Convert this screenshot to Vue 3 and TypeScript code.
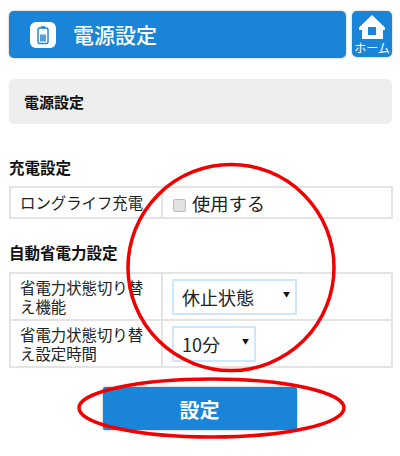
<script setup lang="ts">
import { ref } from 'vue'

const longLife = ref(false)
const powerState = ref('休止状態')
const timeout = ref('10分')
</script>

<template>
  <div class="page">
    <header class="top">
      <div class="title-bar">
        <span class="title-icon">
          <svg viewBox="0 0 26 26" width="26" height="26">
            <rect width="26" height="26" rx="6" fill="#fff" />
            <rect x="8" y="6" width="10" height="15.500" rx="1.500" fill="none" stroke="#1a85d8" stroke-width="1.400" />
            <rect x="11" y="4.200" width="4" height="2" fill="#1a85d8" />
            <rect x="10" y="12.500" width="6" height="7" fill="#4f9fdc" />
          </svg>
        </span>
        <h1>電源設定</h1>
      </div>
      <div class="home">
        <svg viewBox="0 0 28 24" width="28" height="24">
          <path fill-rule="evenodd" fill="#fff" d="M14 0 L27 12.500 L27 15 L25 15 L25 24 L4 24 L4 15 L1 15 L1 12.500 Z M10 12 L10 20 L18 20 L18 12 Z" />
        </svg>
        <span>ホーム</span>
      </div>
    </header>

    <div class="crumb">電源設定</div>

    <h2 class="first">充電設定</h2>
    <table>
      <tbody>
        <tr>
          <th class="one-line">ロングライフ充電</th>
          <td class="check-cell">
            <label class="check"><input v-model="longLife" type="checkbox" /><span>使用する</span></label>
          </td>
        </tr>
      </tbody>
    </table>

    <h2 class="second">自動省電力設定</h2>
    <table>
      <tbody>
        <tr>
          <th>省電力状態切り替え機能</th>
          <td>
            <div class="select wide">
              <span>{{ powerState }}</span><i>▼</i>
            </div>
          </td>
        </tr>
        <tr>
          <th>省電力状態切り替え設定時間</th>
          <td>
            <div class="select narrow">
              <span>{{ timeout }}</span><i>▼</i>
            </div>
          </td>
        </tr>
      </tbody>
    </table>

    <div class="actions">
      <button type="button">設定</button>
    </div>

    <!-- 赤い丸の注釈 -->
    <svg class="marks" viewBox="0 0 400 456" width="400" height="456">
      <circle cx="231" cy="267.500" r="103" fill="none" stroke="#f00000" stroke-width="3.500" />
      <ellipse cx="211.500" cy="408" rx="132.500" ry="29" fill="none" stroke="#f00000" stroke-width="3.500" />
    </svg>
  </div>
</template>

<style>
html, body { margin: 0; background: #fff; }
</style>

<style scoped>
.page {
  position: relative;
  width: 400px;
  height: 456px;
  overflow: hidden;
  box-sizing: border-box;
  padding: 11px 8px 0 9px;
  background: #fff;
  color: #222;
  font-family: "Noto Sans CJK JP", "Liberation Sans", sans-serif;
}
.top {
  display: flex;
  gap: 6px;
  align-items: flex-start;
}
.title-bar {
  flex: 1;
  height: 47px;
  display: flex;
  align-items: center;
  gap: 17px;
  padding-left: 21px;
  box-sizing: border-box;
  background: #1a85d8;
  border-radius: 5px;
  box-shadow: 0 0 2px rgba(120, 100, 80, 0.6);
}
.title-icon { display: flex; }
.title-bar h1 {
  margin: 0;
  color: #fff;
  font-size: 21px;
  font-weight: 500;
  line-height: 1;
}
.home {
  width: 40px;
  height: 46px;
  background: #1a85d8;
  border-radius: 5px;
  box-shadow: 0 0 2px rgba(120, 100, 80, 0.6);
  display: flex;
  flex-direction: column;
  align-items: center;
  padding-top: 4px;
  box-sizing: border-box;
}
.home span {
  margin-top: 2px;
  color: #fff;
  font-size: 12px;
  line-height: 14px;
  white-space: nowrap;
}
.crumb {
  margin-top: 21px;
  height: 45px;
  line-height: 46px;
  padding-left: 15px;
  background: #eee;
  border-radius: 5px;
  font-size: 15px;
  font-weight: 700;
  color: #111;
}
h2 {
  margin: 0;
  font-size: 15.500px;
  font-weight: 700;
  line-height: 20px;
  color: #111;
}
h2.first { margin-top: 33px; margin-bottom: 9px; }
h2.second { margin-top: 23px; margin-bottom: 10px; }
table {
  width: 384px;
  table-layout: fixed;
  border-collapse: collapse;
}
th, td {
  border: 2px solid #e4e4e4;
  padding: 0;
  height: 45px;
  vertical-align: middle;
}
th {
  width: 152px;
  box-sizing: border-box;
  padding: 0 8px 0 9px;
  text-align: left;
  font-weight: 400;
  font-size: 15.400px;
  line-height: 19px;
}
th.one-line { height: 29px; white-space: nowrap; padding-right: 0; }
td { padding-left: 9px; }
.check-cell { height: 29px; }
.check {
  display: flex;
  align-items: center;
  gap: 6px;
  padding-top: 1px;
  font-size: 18.300px;
  line-height: 1;
}
.check input {
  appearance: none;
  box-sizing: border-box;
  width: 13px;
  height: 13px;
  margin: 5px 0 0 1px;
  background: #e2e2e2;
  border: 1px solid #bdbdbd;
  border-radius: 2px;
}
.select {
  height: 36px;
  border: 2px solid #cfe7fa;
  box-sizing: border-box;
  background: #fff;
  display: flex;
  align-items: center;
  justify-content: space-between;
  padding: 0 5px 0 8px;
  font-size: 18px;
  color: #222;
}
.select i {
  font-style: normal;
  font-size: 7px;
  margin: -5px 0 0;
  color: #111;
}
.wide { width: 125px; }
.narrow { width: 84px; }
.actions {
  display: flex;
  justify-content: center;
  margin-top: 19px;
  padding-right: 2px;
}
button {
  width: 194px;
  height: 43px;
  padding: 2px 0 0;
  border: none;
  border-radius: 2px;
  background: #1a85d8;
  color: #fff;
  font-family: inherit;
  font-size: 20px;
  font-weight: 700;
  box-shadow: 0 0 3px rgba(150, 120, 100, 0.6);
}
.marks {
  position: absolute;
  top: 0;
  left: 0;
  pointer-events: none;
}
</style>
